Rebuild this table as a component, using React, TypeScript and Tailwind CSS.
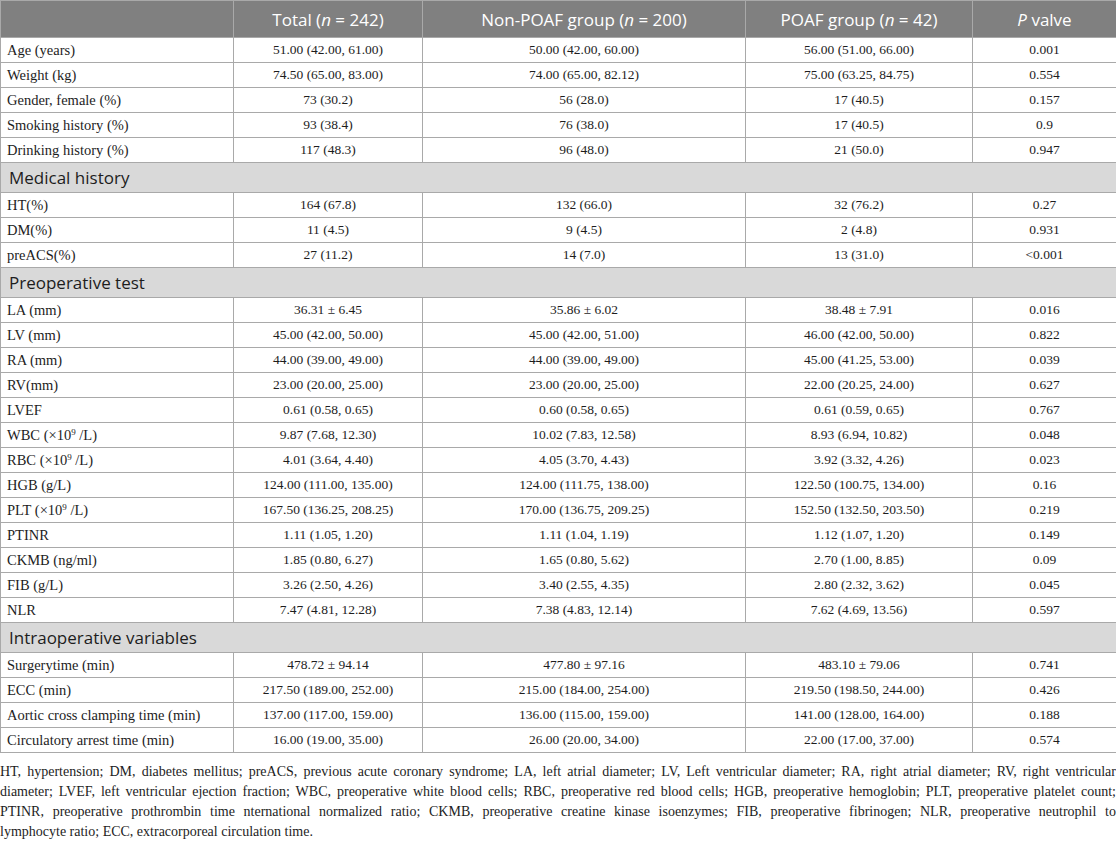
import React from "react";

type Row = { label: React.ReactNode; v: [string, string, string, string] };
type Section = { title?: string; rows: Row[] };

const sup9 = (prefix: string) => (
  <>
    {prefix} (×10<sup className="text-[9px]">9</sup> /L)
  </>
);

const sections: Section[] = [
  {
    rows: [
      { label: "Age (years)", v: ["51.00 (42.00, 61.00)", "50.00 (42.00, 60.00)", "56.00 (51.00, 66.00)", "0.001"] },
      { label: "Weight (kg)", v: ["74.50 (65.00, 83.00)", "74.00 (65.00, 82.12)", "75.00 (63.25, 84.75)", "0.554"] },
      { label: "Gender, female (%)", v: ["73 (30.2)", "56 (28.0)", "17 (40.5)", "0.157"] },
      { label: "Smoking history (%)", v: ["93 (38.4)", "76 (38.0)", "17 (40.5)", "0.9"] },
      { label: "Drinking history (%)", v: ["117 (48.3)", "96 (48.0)", "21 (50.0)", "0.947"] },
    ],
  },
  {
    title: "Medical history",
    rows: [
      { label: "HT(%)", v: ["164 (67.8)", "132 (66.0)", "32 (76.2)", "0.27"] },
      { label: "DM(%)", v: ["11 (4.5)", "9 (4.5)", "2 (4.8)", "0.931"] },
      { label: "preACS(%)", v: ["27 (11.2)", "14 (7.0)", "13 (31.0)", "<0.001"] },
    ],
  },
  {
    title: "Preoperative test",
    rows: [
      { label: "LA (mm)", v: ["36.31 ± 6.45", "35.86 ± 6.02", "38.48 ± 7.91", "0.016"] },
      { label: "LV (mm)", v: ["45.00 (42.00, 50.00)", "45.00 (42.00, 51.00)", "46.00 (42.00, 50.00)", "0.822"] },
      { label: "RA (mm)", v: ["44.00 (39.00, 49.00)", "44.00 (39.00, 49.00)", "45.00 (41.25, 53.00)", "0.039"] },
      { label: "RV(mm)", v: ["23.00 (20.00, 25.00)", "23.00 (20.00, 25.00)", "22.00 (20.25, 24.00)", "0.627"] },
      { label: "LVEF", v: ["0.61 (0.58, 0.65)", "0.60 (0.58, 0.65)", "0.61 (0.59, 0.65)", "0.767"] },
      { label: sup9("WBC"), v: ["9.87 (7.68, 12.30)", "10.02 (7.83, 12.58)", "8.93 (6.94, 10.82)", "0.048"] },
      { label: sup9("RBC"), v: ["4.01 (3.64, 4.40)", "4.05 (3.70, 4.43)", "3.92 (3.32, 4.26)", "0.023"] },
      { label: "HGB (g/L)", v: ["124.00 (111.00, 135.00)", "124.00 (111.75, 138.00)", "122.50 (100.75, 134.00)", "0.16"] },
      { label: sup9("PLT"), v: ["167.50 (136.25, 208.25)", "170.00 (136.75, 209.25)", "152.50 (132.50, 203.50)", "0.219"] },
      { label: "PTINR", v: ["1.11 (1.05, 1.20)", "1.11 (1.04, 1.19)", "1.12 (1.07, 1.20)", "0.149"] },
      { label: "CKMB (ng/ml)", v: ["1.85 (0.80, 6.27)", "1.65 (0.80, 5.62)", "2.70 (1.00, 8.85)", "0.09"] },
      { label: "FIB (g/L)", v: ["3.26 (2.50, 4.26)", "3.40 (2.55, 4.35)", "2.80 (2.32, 3.62)", "0.045"] },
      { label: "NLR", v: ["7.47 (4.81, 12.28)", "7.38 (4.83, 12.14)", "7.62 (4.69, 13.56)", "0.597"] },
    ],
  },
  {
    title: "Intraoperative variables",
    rows: [
      { label: "Surgerytime (min)", v: ["478.72 ± 94.14", "477.80 ± 97.16", "483.10 ± 79.06", "0.741"] },
      { label: "ECC (min)", v: ["217.50 (189.00, 252.00)", "215.00 (184.00, 254.00)", "219.50 (198.50, 244.00)", "0.426"] },
      { label: "Aortic cross clamping time (min)", v: ["137.00 (117.00, 159.00)", "136.00 (115.00, 159.00)", "141.00 (128.00, 164.00)", "0.188"] },
      { label: "Circulatory arrest time (min)", v: ["16.00 (19.00, 35.00)", "26.00 (20.00, 34.00)", "22.00 (17.00, 37.00)", "0.574"] },
    ],
  },
];

const sans = "font-['Open_Sans','Noto_Sans',sans-serif]";
const serif = "font-['Liberation_Serif','DejaVu_Serif',serif]";

export default function App() {
  return (
    <div className="w-[1116px] bg-white text-[#1d1d1d]">
      <table className="w-[1116px] table-fixed border-collapse">
        <colgroup>
          <col className="w-[233px]" />
          <col className="w-[189px]" />
          <col className="w-[323px]" />
          <col className="w-[227px]" />
          <col className="w-[144px]" />
        </colgroup>
        <thead>
          <tr className={`h-[37px] bg-[#808080] text-white ${sans} text-[17px]`}>
            <th className="border border-[#a9a9a9] font-normal"></th>
            <th className="border border-[#a9a9a9] font-normal pt-[2px]">
              Total (<i>n</i> = 242)
            </th>
            <th className="border border-[#a9a9a9] font-normal pt-[2px]">
              Non-POAF group (<i>n</i> = 200)
            </th>
            <th className="border border-[#a9a9a9] font-normal pt-[2px]">
              POAF group (<i>n</i> = 42)
            </th>
            <th className="border border-[#a9a9a9] font-normal pt-[2px]">
              <i>P</i> valve
            </th>
          </tr>
        </thead>
        <tbody>
          {sections.map((s, si) => (
            <React.Fragment key={si}>
              {s.title && (
                <tr className="h-[30px] bg-[#d9d9d9]">
                  <td
                    colSpan={5}
                    className={`border border-[#a9a9a9] pl-[8px] pb-[1px] ${sans} text-[17px] leading-none text-[#1d1d1d]`}
                  >
                    {s.title}
                  </td>
                </tr>
              )}
              {s.rows.map((r, ri) => (
                <tr key={ri} className={`h-[25px] ${serif}`}>
                  <td className="border border-[#a9a9a9] pl-[6px] text-[14.5px] leading-none whitespace-nowrap">
                    {r.label}
                  </td>
                  {r.v.map((x, xi) => (
                    <td
                      key={xi}
                      className="border border-[#a9a9a9] text-center text-[13.5px] leading-none whitespace-nowrap"
                    >
                      {x}
                    </td>
                  ))}
                </tr>
              ))}
            </React.Fragment>
          ))}
        </tbody>
      </table>
      <div className={`mt-[9px] ${serif} text-[14px] leading-[20px] text-[#1d1d1d]`}>
        <p className="text-justify [text-align-last:justify]">
          HT, hypertension; DM, diabetes mellitus; preACS, previous acute coronary syndrome; LA, left atrial diameter; LV, Left ventricular diameter; RA, right atrial diameter; RV, right ventricular
        </p>
        <p className="text-justify [text-align-last:justify]">
          diameter; LVEF, left ventricular ejection fraction; WBC, preoperative white blood cells; RBC, preoperative red blood cells; HGB, preoperative hemoglobin; PLT, preoperative platelet count;
        </p>
        <p className="text-justify [text-align-last:justify]">
          PTINR, preoperative prothrombin time nternational normalized ratio; CKMB, preoperative creatine kinase isoenzymes; FIB, preoperative fibrinogen; NLR, preoperative neutrophil to
        </p>
        <p>lymphocyte ratio; ECC, extracorporeal circulation time.</p>
      </div>
    </div>
  );
}
